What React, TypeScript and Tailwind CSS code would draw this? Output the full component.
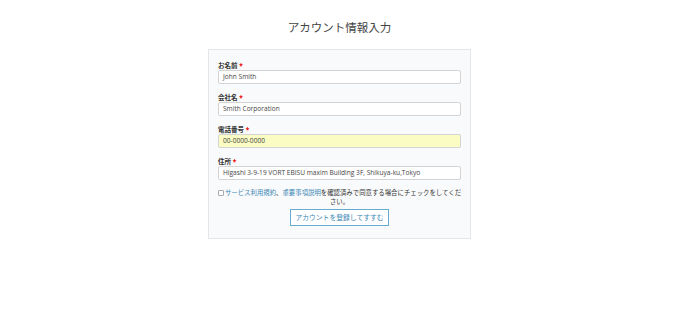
export default function App() {
  const font = { fontFamily: '"Open Sans", "Noto Sans CJK JP", sans-serif' };
  const Field = ({ label, value, yellow }: { label: string; value: string; yellow?: boolean }) => (
    <div className="flex flex-col">
      <div className="h-[9px] text-[6.5px] leading-[9px] font-bold text-[#333]">
        {label} <span className="text-[#e00]">*</span>
      </div>
      <div
        className={`h-[14px] border border-[#d4d4d4] rounded-[2px] px-[4px] text-[6.6px] leading-[12px] text-[#444] ${
          yellow ? "bg-[#fbfcc3]" : "bg-white"
        }`}
      >
        {value}
      </div>
    </div>
  );
  return (
    <div className="w-[679px] h-[333px] bg-white flex flex-col items-center" style={font}>
      <div className="mt-[20px] h-[16px] text-[11.5px] leading-[16px] text-[#444]">アカウント情報入力</div>
      <div className="mt-[13px] w-[263px] border border-[#e6e6e6] bg-[#f9fafb] pt-[11px] pb-[12px] px-[9px] flex flex-col">
        <div className="flex flex-col gap-[9px]">
          <Field label="お名前" value="John Smith" />
          <Field label="会社名" value="Smith Corporation" />
          <Field label="電話番号" value="00-0000-0000" yellow />
          <Field label="住所" value="Higashi 3-9-19 VORT EBISU maxim Building 3F, Shikuya-ku,Tokyo" />
        </div>
        <p className="mt-[9px] -mx-[1px] text-[6.4px] leading-[8.5px] text-[#333] text-center">
          <span className="inline-block w-[6px] h-[6px] border border-[#aaa] rounded-[1px] bg-white align-middle mr-[1px]" />
          <span className="text-[#3b88b5]">サービス利用規約</span>、<span className="text-[#3b88b5]">重要事項説明</span>を確認済みで同意する場合にチェックをしてくだ<br />さい。
        </p>
        <div className="flex justify-center mt-[3px]">
          <div className="h-[17px] px-[4px] border border-[#67acd0] bg-white text-[6.8px] leading-[15px] text-[#3b88b5] flex items-center">
            アカウントを登録してすすむ
          </div>
        </div>
      </div>
    </div>
  );
}
